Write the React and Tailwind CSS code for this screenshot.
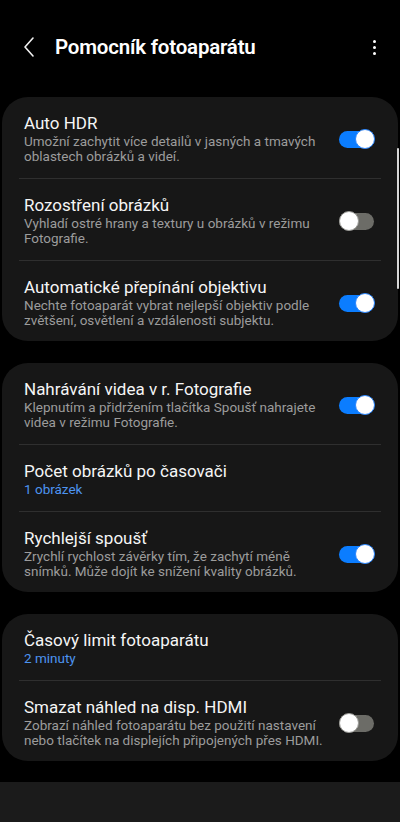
import React from 'react';

const Toggle = ({ on }) => (
  <div className="relative w-[36px] h-[20px] shrink-0">
    <div className={`absolute left-0 right-[1px] top-[2px] h-[17px] rounded-full ${on ? 'bg-[#0b7dff]' : 'bg-[#6c6c67]'}`} />
    <div
      className={`absolute top-0 w-[20px] h-[20px] rounded-full bg-white border ${
        on ? 'right-0 border-[#2a86ff]' : 'left-0 border-[#9a9a96]'
      }`}
    />
  </div>
);

const Row = ({ title, lines, value, toggle, last }) => (
  <div className={`flex items-center pl-[22px] pr-[23px] pt-4 ${last ? 'pb-[13px]' : 'pb-[14px]'}`}>
    <div className="flex-1 min-w-0">
      <div className="text-[17px] leading-[20px] text-[#f5f5f5]">{title}</div>
      {lines && (
        <div className="mt-[1px] text-[13.5px] leading-[15px] text-[#9c9c9c]">
          {lines.map((l) => (
            <div key={l} className="whitespace-nowrap">{l}</div>
          ))}
        </div>
      )}
      {value && <div className="mt-[1px] text-[13.5px] leading-[15px] text-[#4d94f0]">{value}</div>}
    </div>
    {toggle !== undefined && <Toggle on={toggle} />}
  </div>
);

const Card = ({ rows }) => (
  <div className="mx-[2px] rounded-[26px] bg-[#171717]">
    {rows.map((r, i) => (
      <React.Fragment key={r.title}>
        {i > 0 && <div className="mx-[17px] h-px bg-[#2f2f2f]" />}
        <Row {...r} last={i === rows.length - 1} />
      </React.Fragment>
    ))}
  </div>
);

export default function App() {
  return (
    <div
      className="relative w-[400px] h-[822px] overflow-hidden bg-black"
      style={{ fontFamily: 'Roboto, "Noto Sans", sans-serif' }}
    >
      <div className="flex items-center h-[97px] pb-[3px] pl-[22px] pr-[24px]">
        <svg width="14" height="22" viewBox="0 0 14 22" className="mr-[19px]">
          <path d="M11 2 L3 11 L11 20" fill="none" stroke="#f0f0f0" strokeWidth="1.6" strokeLinecap="round" strokeLinejoin="round" />
        </svg>
        <div className="flex-1 text-[20.5px] font-semibold text-white tracking-[-0.2px]">Pomocník fotoaparátu</div>
        <div className="flex flex-col items-center gap-[3px]">
          <span className="w-[3px] h-[3px] rounded-full bg-white" />
          <span className="w-[3px] h-[3px] rounded-full bg-white" />
          <span className="w-[3px] h-[3px] rounded-full bg-white" />
        </div>
      </div>

      <div className="flex flex-col gap-[22px]">
        <Card
          rows={[
            {
              title: 'Auto HDR',
              lines: ['Umožní zachytit více detailů v jasných a tmavých', 'oblastech obrázků a videí.'],
              toggle: true,
            },
            {
              title: 'Rozostření obrázků',
              lines: ['Vyhladí ostré hrany a textury u obrázků v režimu', 'Fotografie.'],
              toggle: false,
            },
            {
              title: 'Automatické přepínání objektivu',
              lines: ['Nechte fotoaparát vybrat nejlepší objektiv podle', 'zvětšení, osvětlení a vzdálenosti subjektu.'],
              toggle: true,
            },
          ]}
        />
        <Card
          rows={[
            {
              title: 'Nahrávání videa v r. Fotografie',
              lines: ['Klepnutím a přidržením tlačítka Spoušť nahrajete', 'videa v režimu Fotografie.'],
              toggle: true,
            },
            { title: 'Počet obrázků po časovači', value: '1 obrázek' },
            {
              title: 'Rychlejší spoušť',
              lines: ['Zrychlí rychlost závěrky tím, že zachytí méně', 'snímků. Může dojít ke snížení kvality obrázků.'],
              toggle: true,
            },
          ]}
        />
        <Card
          rows={[
            { title: 'Časový limit fotoaparátu', value: '2 minuty' },
            {
              title: 'Smazat náhled na disp. HDMI',
              lines: ['Zobrazí náhled fotoaparátu bez použití nastavení', 'nebo tlačítek na displejích připojených přes HDMI.'],
              toggle: false,
            },
          ]}
        />
      </div>

      <div className="mt-[21px] h-[60px] bg-[#1b1b1b]" />

      <div className="absolute right-[1px] top-[148px] w-[2px] h-[141px] rounded-full bg-[#d8d8d8]" />
    </div>
  );
}
